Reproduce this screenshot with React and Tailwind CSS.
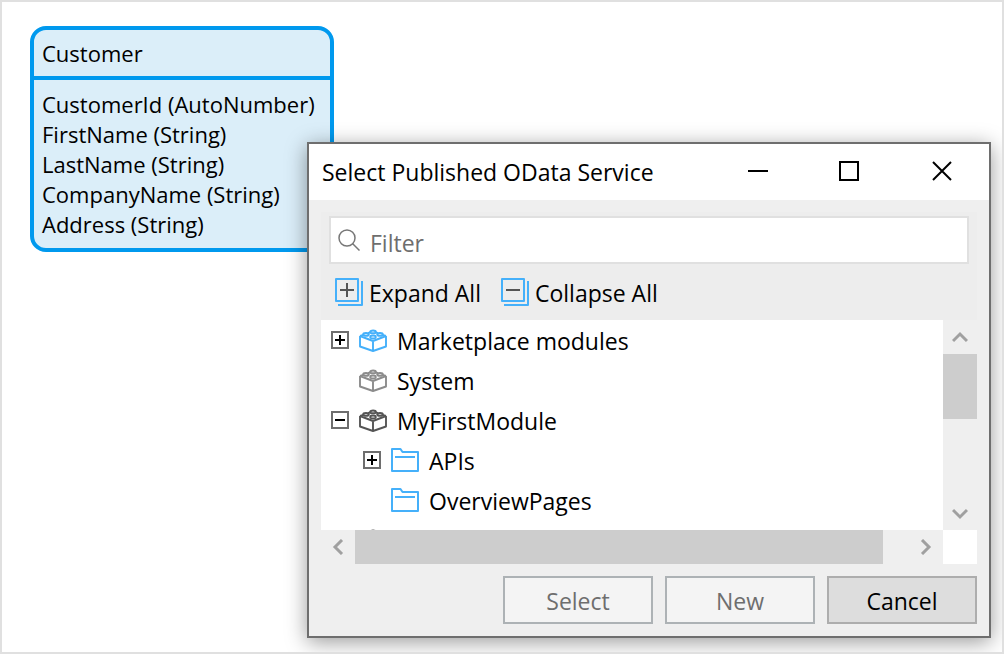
const FONT = "font-['Open_Sans','Noto_Sans',sans-serif]";

function BrickIcon({ className }) {
  return (
    <svg viewBox="0 -1 28 24" className={`h-6 w-7 shrink-0 ${className}`} fill="none" stroke="currentColor" strokeWidth="1.900" strokeLinejoin="round" aria-hidden="true">
      <path d="M1 7v10.500l13 4.500 13-4.500V7M1 7l13 5 13-5M14 12v10M1 7l3.500-1.200M27 7l-3.500-1.200M9 4.200l2.500-1M19 4.200l-2.500-1" />
      <ellipse cx="14" cy="2.900" rx="2.800" ry="1.400" />
      <ellipse cx="7" cy="5.400" rx="2.800" ry="1.400" />
      <ellipse cx="21" cy="5.400" rx="2.800" ry="1.400" />
      <ellipse cx="14" cy="8" rx="2.800" ry="1.500" />
    </svg>
  );
}

function FolderIcon() {
  return (
    <svg viewBox="0 0 28 24" className="h-6 w-7 shrink-0 text-[#45b0fa]" fill="none" stroke="currentColor" strokeWidth="2" strokeLinejoin="round" aria-hidden="true">
      <path d="M1 1h8.500l2 3H27v19H1zM4 9h20" />
    </svg>
  );
}

function StackIcon({ plus }) {
  return (
    <svg viewBox="0 0 28 28" className="size-7 shrink-0" fill="none" strokeWidth="2" aria-hidden="true">
      <path d="M1 1h22v22H1zM27 3v24H3" stroke="#45b0fa" strokeLinejoin="round" />
      <path d={plus ? "M5 12h14M12 5v14" : "M5 12h14"} stroke="#555" />
    </svg>
  );
}

function Toggle({ open, label }) {
  return (
    <button type="button" aria-label={label} aria-expanded={open} className="size-[18px] shrink-0 border-2 border-[#6e6e6e] bg-white">
      <svg viewBox="0 0 14 14" className="size-[14px]" stroke="#000" strokeWidth="2" aria-hidden="true">
        <path d={open ? "M2 7h10" : "M2 7h10M7 2v10"} />
      </svg>
    </button>
  );
}

function TreeRow({ name, icon, toggle, nested }) {
  return (
    <li role="treeitem" className={`flex h-10 items-center gap-[10px] ${nested ? "pl-[42px]" : "pl-[10px]"}`}>
      {toggle ? <Toggle open={toggle === "open"} label={`Toggle ${name}`} /> : <span className="w-[18px]" />}
      {icon}
      <span className="whitespace-nowrap pt-[2px]">{name}</span>
    </li>
  );
}

function ScrollButton({ label, d }) {
  return (
    <button type="button" aria-label={label} className="flex size-[34px] shrink-0 items-center justify-center">
      <svg viewBox="0 0 16 16" className="size-4" fill="none" stroke="#a0a0a0" strokeWidth="3" aria-hidden="true">
        <path d={d} />
      </svg>
    </button>
  );
}

const attributes = [
  "CustomerId (AutoNumber)",
  "FirstName (String)",
  "LastName (String)",
  "CompanyName (String)",
  "Address (String)",
];

export default function App() {
  return (
    <main className={`relative min-h-screen overflow-hidden border-2 border-[#e0e0e0] bg-white pt-6 pl-7 text-black ${FONT}`}>
      <section className="w-[304px] overflow-hidden rounded-[16px] border-4 border-[#0099ee] bg-[#dbeef9] text-[22px] leading-[30px]">
        <h1 className="border-b-4 border-[#0099ee] px-2 py-2">Customer</h1>
        <ul className="px-2 py-[9px]">
          {attributes.map((a) => (
            <li key={a} className="whitespace-nowrap">{a}</li>
          ))}
        </ul>
      </section>

      <section role="dialog" aria-labelledby="dialog-title" className="absolute top-[140px] right-[11px] left-[305px] border-2 border-[#6e6e6e] bg-[#efefef] text-[23px] leading-8 shadow-[0_4px_20px_rgba(0,0,0,0.4)]">
        <header className="flex h-14 items-center bg-white pl-[13px]">
          <h2 id="dialog-title" className="grow whitespace-nowrap">Select Published OData Service</h2>
          <div className="flex">
            <button type="button" aria-label="Minimize" className="flex h-14 w-[90px] items-center justify-center pb-[2px]">
              <svg viewBox="0 0 20 20" className="size-5" stroke="#000" strokeWidth="2"><path d="M0 10h20" /></svg>
            </button>
            <button type="button" aria-label="Maximize" className="flex h-14 w-[92px] items-center justify-center pb-[2px]">
              <svg viewBox="0 0 20 20" className="size-5" fill="none" stroke="#000" strokeWidth="2"><path d="M1 1h18v18H1z" /></svg>
            </button>
            <button type="button" aria-label="Close" className="flex h-14 w-[94px] items-center justify-center pb-[2px]">
              <svg viewBox="0 0 20 20" className="size-5" stroke="#000" strokeWidth="2"><path d="M1 1l18 18M19 1L1 19" /></svg>
            </button>
          </div>
        </header>

        <div className="p-3">
          <div className="bg-[#ededed] px-2 pt-1">
            <label className="flex h-12 items-center gap-[10px] border-2 border-[#e0e0e0] bg-white pl-[7px]">
              <svg viewBox="0 0 22 22" className="size-[22px] shrink-0" fill="none" stroke="#777" strokeWidth="1.5" aria-hidden="true">
                <circle cx="9" cy="9" r="8" />
                <path d="M14.500 14.500l7 7" />
              </svg>
              <input type="text" aria-label="Filter" placeholder="Filter" className="w-full min-w-0 grow pt-[6px] outline-none placeholder:text-[#6e6e6e]" />
            </label>
            <div className="flex h-14 items-center gap-5 pl-[6px]">
              <button type="button" className="flex items-center gap-[6px]"><StackIcon plus /><span className="pt-[2px]">Expand All</span></button>
              <button type="button" className="flex items-center gap-[6px]"><StackIcon /><span className="pt-[2px]">Collapse All</span></button>
            </div>
          </div>

          <div className="flex h-[210px]">
            <ul role="tree" aria-label="Modules" className="min-w-0 grow overflow-hidden bg-white">
              <TreeRow name="Marketplace modules" toggle="closed" icon={<BrickIcon className="text-[#45b0fa]" />} />
              <TreeRow name="System" icon={<BrickIcon className="text-[#8c8c8c]" />} />
              <TreeRow name="MyFirstModule" toggle="open" icon={<BrickIcon className="text-[#555555]" />} />
              <TreeRow name="APIs" toggle="closed" nested icon={<FolderIcon />} />
              <TreeRow name="OverviewPages" nested icon={<FolderIcon />} />
              <TreeRow name="" icon={<BrickIcon className="text-[#555555]" />} />
            </ul>
            <div className="flex w-[34px] shrink-0 flex-col">
              <ScrollButton label="Scroll up" d="M1 12l7-7 7 7" />
              <div className="grow"><div className="h-[65px] bg-[#cdcdcd]" /></div>
              <ScrollButton label="Scroll down" d="M1 5l7 7 7-7" />
            </div>
          </div>
          <div className="flex">
            <ScrollButton label="Scroll left" d="M12 1L5 8l7 7" />
            <div className="grow pr-[26px]"><div className="h-[34px] bg-[#cdcdcd]" /></div>
            <ScrollButton label="Scroll right" d="M4 1l7 7-7 7" />
            <div className="size-[34px] bg-white" />
          </div>

          <footer className="flex justify-end gap-3 pt-3">
            <button type="button" disabled className="h-12 w-[150px] border-2 border-[#adb2b5] bg-[#f4f4f4] pt-[2px] text-[#6e6e6e]">Select</button>
            <button type="button" disabled className="h-12 w-[150px] border-2 border-[#adb2b5] bg-[#f4f4f4] pt-[2px] text-[#6e6e6e]">New</button>
            <button type="button" className="h-12 w-[150px] border-2 border-[#adadad] bg-[#dddddd] pt-[2px]">Cancel</button>
          </footer>
        </div>
      </section>
    </main>
  );
}
